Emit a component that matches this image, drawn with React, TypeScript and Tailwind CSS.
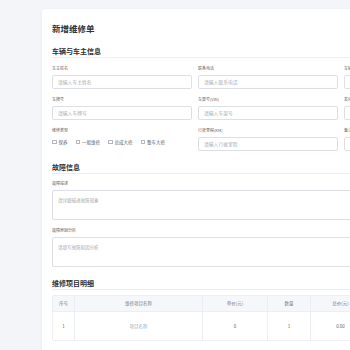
const FIELDS: { label: string; placeholder: string }[] = [
  { label: "车主姓名", placeholder: "请输入车主姓名" },
  { label: "联系电话", placeholder: "请输入联系电话" },
  { label: "车辆品牌", placeholder: "请输入车辆品牌" },
  { label: "车牌号", placeholder: "请输入车牌号" },
  { label: "车架号(VIN)", placeholder: "请输入车架号" },
  { label: "发动机号", placeholder: "请输入发动机号" },
];

const REPAIR_TYPES = ["保养", "一般维修", "总成大修", "整车大修"];

export default function App() {
  return (
    <div className="w-[350px] h-[350px] overflow-hidden bg-[#f3f5f8] pl-[42px] pt-[9px] font-['Noto_Sans_CJK_SC',sans-serif]">
      <div className="w-[480px] min-h-[400px] bg-white rounded-[4px] shadow-[0_1px_4px_rgba(0,0,0,0.06)] px-[10px] pt-[13px]">
        <h1 className="text-[8.5px] leading-[12px] font-bold text-[#303133]">新增维修单</h1>

        {/* 车辆与车主信息 */}
        <SectionTitle className="mt-[12px]">车辆与车主信息</SectionTitle>
        <div className="mt-[7px] grid grid-cols-[140px_140px_140px] gap-x-[6px] gap-y-[7px]">
          {FIELDS.map((f) => (
            <Field key={f.label} label={f.label}>
              <Input placeholder={f.placeholder} />
            </Field>
          ))}
          <Field label="维修类型">
            <div className="h-[10px] flex items-center gap-[8px]">
              {REPAIR_TYPES.map((t) => (
                <label key={t} className="flex items-center gap-[2px] text-[4.5px] leading-[6px] text-[#606266]">
                  <span className="w-[4.5px] h-[4.5px] border-[0.5px] border-[#b4b7bd] rounded-[0.5px] bg-white" />
                  {t}
                </label>
              ))}
            </div>
          </Field>
          <Field label="行驶里程(KM)">
            <Input placeholder="请输入行驶里程" />
          </Field>
          <Field label="备注">
            <Input placeholder="请输入备注" />
          </Field>
        </div>

        {/* 故障信息 */}
        <SectionTitle className="mt-[11px]">故障信息</SectionTitle>
        <div className="mt-[6px]">
          <Label>故障描述</Label>
          <TextArea placeholder="请详细描述故障现象" />
        </div>
        <div className="mt-[7px]">
          <Label>故障原因分析</Label>
          <TextArea placeholder="请填写故障原因分析" />
        </div>

        {/* 维修项目明细 */}
        <SectionTitle className="mt-[11px]">维修项目明细</SectionTitle>
        <div className="mt-[5px] border border-[#ebeef5] rounded-[2px] text-[4.5px] text-[#606266]">
          <div className="flex h-[16px] bg-[#f5f7fa] border-b border-[#ebeef5] text-[#7c7f86]">
            <Cell w="w-[22px]">序号</Cell>
            <Cell w="w-[128px]">维修项目名称</Cell>
            <Cell w="w-[65px]">单价(元)</Cell>
            <Cell w="w-[43px]">数量</Cell>
            <Cell w="w-[60px]">总价(元)</Cell>
            <Cell w="w-[60px]" last>操作</Cell>
          </div>
          <div className="flex h-[28px]">
            <Cell w="w-[22px]">1</Cell>
            <Cell w="w-[128px]">
              <span className="text-[#a8abb2]">项目名称</span>
            </Cell>
            <Cell w="w-[65px]">0</Cell>
            <Cell w="w-[43px]">1</Cell>
            <Cell w="w-[60px]">0.00</Cell>
            <Cell w="w-[60px]" last>
              <span className="text-[#f56c6c]">删除</span>
            </Cell>
          </div>
        </div>
        <button className="mt-[5px] w-[44px] h-[14px] rounded-[2px] bg-[#409eff] text-white text-[4.5px]">
          + 添加项目
        </button>
      </div>
    </div>
  );
}

function SectionTitle({ children, className = "" }: { children: React.ReactNode; className?: string }) {
  return (
    <div className={`${className} pb-[1px] border-b border-[#ebeef5]`}>
      <h2 className="text-[7px] leading-[10px] font-bold text-[#303133]">{children}</h2>
    </div>
  );
}

function Label({ children }: { children: React.ReactNode }) {
  return <div className="text-[4px] leading-[6px] text-[#606266] mb-[4px]">{children}</div>;
}

function Field({ label, children }: { label: string; children: React.ReactNode }) {
  return (
    <div>
      <Label>{label}</Label>
      {children}
    </div>
  );
}

function Input({ placeholder }: { placeholder: string }) {
  return (
    <div className="h-[14px] border-[0.5px] border-[#dcdfe6] rounded-[2px] px-[5px] flex items-center text-[4.8px] text-[#a8abb2] whitespace-nowrap overflow-hidden">
      {placeholder}
    </div>
  );
}

function TextArea({ placeholder }: { placeholder: string }) {
  return (
    <div className="h-[30px] border-[0.5px] border-[#dcdfe6] rounded-[2px] px-[5px] pt-[6px] text-[4.5px] leading-[6px] text-[#a8abb2]">
      {placeholder}
    </div>
  );
}

function Cell({ w, last, children }: { w: string; last?: boolean; children: React.ReactNode }) {
  return (
    <div className={`${w} shrink-0 flex items-center justify-center ${last ? "" : "border-r border-[#ebeef5]"}`}>
      {children}
    </div>
  );
}
